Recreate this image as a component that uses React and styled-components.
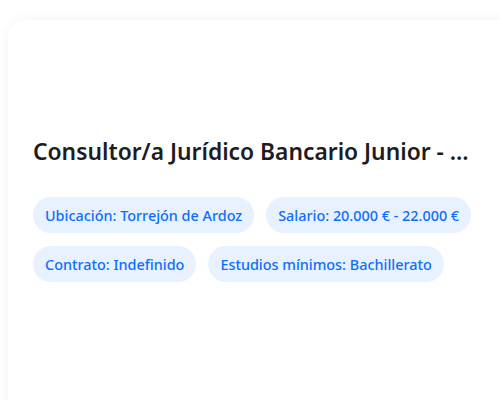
import React from 'react';
import styled, { createGlobalStyle } from 'styled-components';

const GlobalStyle = createGlobalStyle`
  html, body {
    margin: 0;
    padding: 0;
    overflow: hidden;
    background: #ffffff;
    font-family: 'Noto Sans', 'Open Sans', Arial, sans-serif;
  }
`;

const Page = styled.div`
  padding: 20px 0 0 8px;
  height: 400px;
  box-sizing: border-box;
  overflow: hidden;
`;

const Card = styled.div`
  width: 512px;
  height: 420px;
  box-sizing: border-box;
  padding: 117px 25px 0 25px;
  background: #ffffff;
  border-radius: 16px;
  box-shadow: 0 0 12px rgba(0, 0, 0, 0.05);
`;

const Title = styled.h2`
  margin: 0 0 30px 0;
  font-size: 22.8px;
  font-weight: 600;
  line-height: 30px;
  color: #1d1d1f;
  white-space: nowrap;
  overflow: hidden;
  text-overflow: ellipsis;
`;

const Tags = styled.div`
  display: flex;
  flex-wrap: wrap;
  gap: 13px 12px;
`;

const Tag = styled.span`
  display: inline-flex;
  align-items: center;
  height: 36px;
  padding: 0 12px;
  border-radius: 18px;
  background: #e7f1ff;
  color: #0d6efd;
  font-size: 14.4px;
  font-weight: 500;
`;

const tags = [
  'Ubicación: Torrejón de Ardoz',
  'Salario: 20.000 € - 22.000 €',
  'Contrato: Indefinido',
  'Estudios mínimos: Bachillerato',
];

const App = () => (
  <Page>
    <GlobalStyle />
    <Card>
      <Title>Consultor/a Jurídico Bancario Junior - ...</Title>
      <Tags>
        {tags.map(tag => (
          <Tag key={tag}>{tag}</Tag>
        ))}
      </Tags>
    </Card>
  </Page>
);

export default App;
